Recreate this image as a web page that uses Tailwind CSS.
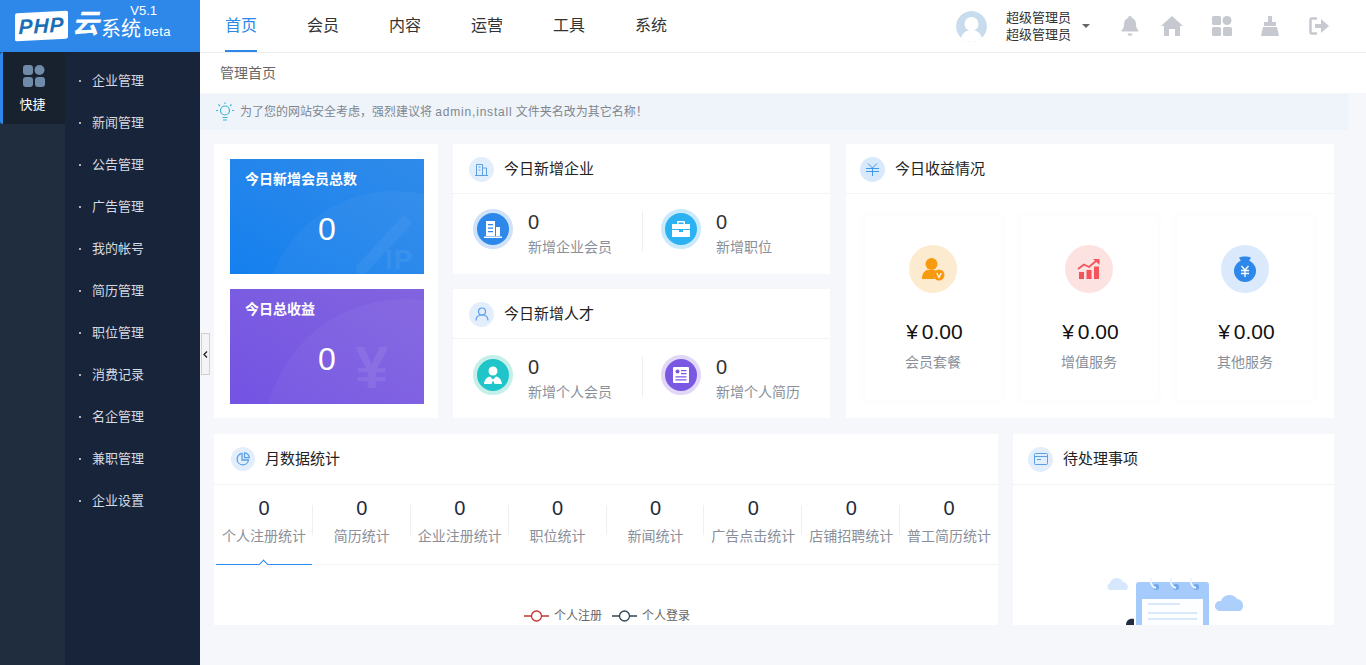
<!DOCTYPE html>
<html lang="zh-CN">
<head>
    <meta charset="UTF-8">
    <title>管理首页</title>
    <script src="https://cdn.jsdelivr.net/npm/@tailwindcss/browser@4"></script>
</head>
<body class="h-[665px] overflow-hidden bg-[#f6f7fb] text-[#333] font-['Liberation_Sans','Noto_Sans_CJK_SC',sans-serif]">
<div class="flex h-[665px]">
    <!-- 左侧 -->
    <aside class="w-[200px] shrink-0 flex flex-col">
        <div class="h-[52px] bg-[#2d88ea] flex items-center pl-[15px] text-white">
            <div class="w-[53px] h-[28px] bg-white rounded-[2px] -skew-y-3 flex items-center justify-center text-[#1a6fb5] font-bold italic text-[21px] tracking-[1px]">PHP</div>
            <span class="ml-[4px] text-[27px] font-bold italic leading-none -mt-[4px]">云</span>
            <span class="ml-[2px] text-[20px] leading-none mt-[5px]">系统</span>
            <div class="flex flex-col items-end -ml-[10px] -mt-[6px] w-[40px]">
                <span class="text-[13px] leading-none mr-[14px] -mt-[4px]">V5.1</span>
                <span class="text-[13px] leading-none mt-[8px] tracking-[.5px]">beta</span>
            </div>
        </div>
        <div class="flex-1 flex">
            <div class="w-[65px] bg-[#1f2d3e]">
                <div class="h-[72px] bg-[#18222f] border-l-[3px] border-[#2d88ea] rounded-l-[3px] flex flex-col items-center pt-[13px]">
                    <svg class="w-[22px] h-[22px]" viewBox="0 0 22 22" fill="#6f8ba8"><rect x="0" y="0" width="10" height="10" rx="3"/><circle cx="16.5" cy="5" r="5"/><rect x="0" y="12" width="10" height="10" rx="3"/><rect x="12" y="12" width="10" height="10" rx="3"/></svg>
                    <span class="text-[13px] text-white mt-[8px] -ml-[3px]">快捷</span>
                </div>
            </div>
            <ul class="w-[135px] bg-[#17243a] pt-[8px] text-[13px] text-[#d5dae0]">
                <li class="h-[42px] flex items-center pl-[14px]"><i class="w-[2px] h-[2px] bg-[#aab2bc] mr-[11px]"></i>企业管理</li>
                <li class="h-[42px] flex items-center pl-[14px]"><i class="w-[2px] h-[2px] bg-[#aab2bc] mr-[11px]"></i>新闻管理</li>
                <li class="h-[42px] flex items-center pl-[14px]"><i class="w-[2px] h-[2px] bg-[#aab2bc] mr-[11px]"></i>公告管理</li>
                <li class="h-[42px] flex items-center pl-[14px]"><i class="w-[2px] h-[2px] bg-[#aab2bc] mr-[11px]"></i>广告管理</li>
                <li class="h-[42px] flex items-center pl-[14px]"><i class="w-[2px] h-[2px] bg-[#aab2bc] mr-[11px]"></i>我的帐号</li>
                <li class="h-[42px] flex items-center pl-[14px]"><i class="w-[2px] h-[2px] bg-[#aab2bc] mr-[11px]"></i>简历管理</li>
                <li class="h-[42px] flex items-center pl-[14px]"><i class="w-[2px] h-[2px] bg-[#aab2bc] mr-[11px]"></i>职位管理</li>
                <li class="h-[42px] flex items-center pl-[14px]"><i class="w-[2px] h-[2px] bg-[#aab2bc] mr-[11px]"></i>消费记录</li>
                <li class="h-[42px] flex items-center pl-[14px]"><i class="w-[2px] h-[2px] bg-[#aab2bc] mr-[11px]"></i>名企管理</li>
                <li class="h-[42px] flex items-center pl-[14px]"><i class="w-[2px] h-[2px] bg-[#aab2bc] mr-[11px]"></i>兼职管理</li>
                <li class="h-[42px] flex items-center pl-[14px]"><i class="w-[2px] h-[2px] bg-[#aab2bc] mr-[11px]"></i>企业设置</li>
            </ul>
        </div>
    </aside>

    <!-- 右侧 -->
    <div class="flex-1 min-w-0 relative">
        <header class="h-[53px] bg-white border-b border-[#eeeff3] flex items-center">
            <nav class="flex h-full text-[16px] text-[#333] pl-[25px] gap-[50px]">
                <a class="h-full flex items-center pt-[2px] text-[#2d88ea] border-b-2 border-[#2d88ea] w-[32px]">首页</a>
                <a class="h-full flex items-center w-[32px]">会员</a>
                <a class="h-full flex items-center w-[32px]">内容</a>
                <a class="h-full flex items-center w-[32px]">运营</a>
                <a class="h-full flex items-center w-[32px]">工具</a>
                <a class="h-full flex items-center w-[32px]">系统</a>
            </nav>
            <div class="ml-auto flex items-center">
                <svg class="w-[31px] h-[31px] rounded-full" viewBox="0 0 31 31"><circle cx="15.5" cy="15.5" r="15.5" fill="#c9dcee"/><circle cx="15.5" cy="13" r="7" fill="#fff"/><path d="M5 27c2-6 6-8 10.500-8s8.500 2 10.500 8a15.500 15.500 0 0 1-21 0z" fill="#fff"/></svg>
                <div class="ml-[19px] text-[13px] leading-[17px] text-[#333]">
                    <div>超级管理员</div>
                    <div>超级管理员</div>
                </div>
                <span class="ml-[11px] w-0 h-0 border-x-[4px] border-x-transparent border-t-[4px] border-t-[#666]"></span>
                <div class="flex items-center mr-[37px] ml-[31px] text-[#c6c9d0]">
                    <svg class="w-[18px] h-[20px]" viewBox="0 0 18 20" fill="currentColor"><path d="M9 0a2 2 0 0 1 2 2c3 1 4 3.500 4 6.500 0 3 1 4.500 2.500 6v1h-17v-1C2 13 3 11.500 3 8.500 3 5.500 4 3 7 2a2 2 0 0 1 2-2z"/><path d="M6.500 17.500h5a2.500 2.500 0 0 1-5 0z"/></svg>
                    <svg class="w-[22px] h-[20px] ml-[22px]" viewBox="0 0 22 20" fill="currentColor"><path d="M11 0 22 10h-3v10h-5v-7H8v7H3V10H0z"/></svg>
                    <svg class="w-[20px] h-[20px] ml-[29px]" viewBox="0 0 20 20" fill="currentColor"><rect width="9" height="9" rx="1.500"/><circle cx="15" cy="4.500" r="4.500"/><rect y="11" width="9" height="9" rx="1.500"/><rect x="11" y="11" width="9" height="9" rx="1.500"/></svg>
                    <svg class="w-[18px] h-[20px] ml-[29px]" viewBox="0 0 18 20" fill="currentColor"><rect x="7" y="0" width="4" height="7"/><rect x="3" y="6" width="12" height="4"/><path d="M2 11h14l2 9H0z"/></svg>
                    <svg class="w-[20px] h-[18px] ml-[30px]" viewBox="0 0 20 18" fill="none"><path d="M8 1.500H2.500a1 1 0 0 0-1 1v13a1 1 0 0 0 1 1H8" stroke="currentColor" stroke-width="2.500"/><path d="M6 7h6V2l8 7-8 7v-5H6z" fill="currentColor"/></svg>
                </div>
            </div>
        </header>

        <div class="h-[40px] bg-white flex items-center pl-[20px] text-[14px] text-[#666]">管理首页</div>

        <div class="h-[36px] mr-[17px] mt-[1px] bg-[#eef4fa] flex items-center pl-[15px] text-[12px] text-[#808690]">
            <svg class="w-[20px] h-[20px] mr-[5px]" viewBox="0 0 20 20" fill="none" stroke="#3cb7d8" stroke-width="1.200"><circle cx="10" cy="8.500" r="4.500"/><path d="M7.500 15.500h5M8 18h4M10 0.500v1.500M1 8.500h2M17 8.500h2M3.500 2.500l1.500 1.500M16.500 2.500 15 4"/></svg>
            <span>为了您的网站安全考虑，强烈建议将 <span class="tracking-[.8px]">admin,install</span> 文件夹名改为其它名称！</span>
        </div>

        <main class="pl-[14px] pr-[32px] pt-[14px]">
            <div class="flex h-[274px]">
                <!-- 今日数字 -->
                <section class="w-[224px] shrink-0 bg-white pl-[16px] pt-[15px] flex flex-col gap-[15px]">
                    <div class="relative overflow-hidden w-[194px] h-[115px] bg-linear-to-tr from-[#1480ee] to-[#2f8bea] text-white">
                        <div class="absolute left-[34px] top-[32px] w-[260px] h-[260px] rounded-full bg-white/[.04]"></div>
                        <div class="absolute left-[155px] bottom-0 text-[28px] font-bold text-white/[.08] leading-none tracking-[1px]">IP</div>
                        <svg class="absolute left-[126px] top-[56px] w-[56px] h-[59px]" viewBox="0 0 56 59" fill="none"><path d="M2 58 52 4" stroke="#fff" stroke-opacity=".05" stroke-width="12"/></svg>
                        <div class="relative pl-[15px] pt-[10px] text-[14px] leading-[20px] font-bold">今日新增会员总数</div>
                        <div class="relative text-center text-[32px] leading-none mt-[24px]">0</div>
                    </div>
                    <div class="relative overflow-hidden w-[194px] h-[115px] bg-linear-to-tr from-[#7353e3] to-[#8264df] text-white">
                        <div class="absolute left-[34px] top-[10px] w-[280px] h-[280px] rounded-full bg-white/[.04]"></div>
                        <div class="absolute left-[125px] bottom-0 text-[60px] font-bold text-white/[.08] leading-[1.2]">¥</div>
                        <div class="relative pl-[15px] pt-[10px] text-[14px] leading-[20px] font-bold">今日总收益</div>
                        <div class="relative text-center text-[32px] leading-none mt-[24px]">0</div>
                    </div>
                </section>

                <!-- 企业、人才 -->
                <div class="w-[377px] ml-[15px] shrink-0 flex flex-col gap-[15px]">
                    <section class="h-[130px] bg-white">
                        <div class="h-[50px] pt-px border-b border-[#f2f3f7] flex items-center pl-[16px] text-[15px] text-[#222]">
                            <span class="w-[25px] h-[25px] rounded-full bg-[#e3eefc] flex items-center justify-center mr-[10px]">
                                <svg class="w-[13px] h-[13px]" viewBox="0 0 13 13" fill="none" stroke="#5a9fe8"><path d="M1.500 12V1.500h6V12M7.500 5h4v7M0 12.500h13M3.500 4h2M3.500 7h2"/></svg>
                            </span>今日新增企业
                        </div>
                        <div class="flex pt-[15px] pl-[20px]">
                            <div class="w-[169px] flex">
                                <span class="w-[40px] h-[40px] rounded-full bg-[#2d88ea] border-[4px] border-[#cfe2f9] flex items-center justify-center">
                                    <svg class="w-[20px] h-[20px]" viewBox="0 0 20 20" fill="#fff"><path d="M3 2h9v15H3z"/><path d="M13 8h4v9h-4zM1 17.500h18V19H1z"/><path d="M5 5h5v1.300H5zM5 8.500h5v1.300H5zM5 12h5v1.300H5z" fill="#2d88ea"/></svg>
                                </span>
                                <div class="ml-[15px]">
                                    <div class="text-[20px] leading-[26px] text-[#333]">0</div>
                                    <div class="text-[14px] leading-[24px] text-[#8a8f99]">新增企业会员</div>
                                </div>
                            </div>
                            <div class="w-px h-[40px] mt-[2px] bg-[#eeeff3]"></div>
                            <div class="flex ml-[18px]">
                                <span class="w-[40px] h-[40px] rounded-full bg-[#2cb1f2] border-[4px] border-[#c9eafb] flex items-center justify-center">
                                    <svg class="w-[20px] h-[20px]" viewBox="0 0 20 20" fill="#fff"><path d="M7 2h6a1 1 0 0 1 1 1v2h-1.500V3.500h-5V5H6V3a1 1 0 0 1 1-1z"/><path d="M1 5h18v5H1zM1 11h7v2h4v-2h7v7H1z"/></svg>
                                </span>
                                <div class="ml-[15px]">
                                    <div class="text-[20px] leading-[26px] text-[#333]">0</div>
                                    <div class="text-[14px] leading-[24px] text-[#8a8f99]">新增职位</div>
                                </div>
                            </div>
                        </div>
                    </section>
                    <section class="h-[129px] bg-white">
                        <div class="h-[50px] pt-px border-b border-[#f2f3f7] flex items-center pl-[16px] text-[15px] text-[#222]">
                            <span class="w-[25px] h-[25px] rounded-full bg-[#e3eefc] flex items-center justify-center mr-[10px]">
                                <svg class="w-[14px] h-[14px]" viewBox="0 0 14 14" fill="none" stroke="#5a9fe8" stroke-width="1.200"><circle cx="7" cy="4.500" r="3.500"/><path d="M1 13.500c0-3.500 2.500-5.500 6-5.500s6 2 6 5.500"/></svg>
                            </span>今日新增人才
                        </div>
                        <div class="flex pt-[16px] pl-[20px]">
                            <div class="w-[169px] flex">
                                <span class="w-[40px] h-[40px] rounded-full bg-[#1fc5c9] border-[4px] border-[#c5efe9] flex items-center justify-center">
                                    <svg class="w-[20px] h-[20px]" viewBox="0 0 20 20" fill="#fff"><circle cx="10" cy="6" r="4.500"/><path d="M1 19c.5-4.500 3-7 6-7.500l3 3 3-3c3 .5 5.500 3 6 7.500H11.500L10 15.500 8.500 19z"/></svg>
                                </span>
                                <div class="ml-[15px] -mt-px">
                                    <div class="text-[20px] leading-[26px] text-[#333]">0</div>
                                    <div class="text-[14px] leading-[24px] text-[#8a8f99]">新增个人会员</div>
                                </div>
                            </div>
                            <div class="w-px h-[40px] mt-[2px] bg-[#eeeff3]"></div>
                            <div class="flex ml-[18px]">
                                <span class="w-[40px] h-[40px] rounded-full bg-[#7a58e2] border-[4px] border-[#e0d8f6] flex items-center justify-center">
                                    <svg class="w-[18px] h-[18px]" viewBox="0 0 18 18" fill="#fff"><path d="M2 1h14a1 1 0 0 1 1 1v14a1 1 0 0 1-1 1H2a1 1 0 0 1-1-1V2a1 1 0 0 1 1-1z"/><circle cx="5.500" cy="5.500" r="2" fill="#7a58e2"/><path d="M9 4h5.500v1.200H9zM9 7h5.500v1.200H9zM3.500 10.300h11v1.200h-11zM3.500 13.300h11v1.200h-11z" fill="#7a58e2"/></svg>
                                </span>
                                <div class="ml-[15px] -mt-px">
                                    <div class="text-[20px] leading-[26px] text-[#333]">0</div>
                                    <div class="text-[14px] leading-[24px] text-[#8a8f99]">新增个人简历</div>
                                </div>
                            </div>
                        </div>
                    </section>
                </div>

                <!-- 收益 -->
                <section class="flex-1 ml-[16px] min-w-0 bg-white">
                    <div class="h-[50px] pt-px border-b border-[#f2f3f7] flex items-center pl-[14px] text-[15px] text-[#222]">
                        <span class="w-[25px] h-[25px] rounded-full bg-[#d8e9fc] flex items-center justify-center mr-[10px]">
                            <svg class="w-[13px] h-[13px]" viewBox="0 0 13 13" fill="none" stroke="#3f97ee"><path d="M2 .5 6.500 5 11 .5M6.500 5v8M0 5.500h13M0 8.500h13"/></svg>
                        </span>今日收益情况
                    </div>
                    <div class="flex pl-[19px] pt-[22px] gap-[20px]">
                        <div class="w-[136px] h-[184px] bg-white shadow-[0_0_8px_rgba(120,130,160,0.05)] flex flex-col items-center pt-[29px]">
                            <span class="w-[48px] h-[48px] rounded-full bg-[#fdebd0] flex items-center justify-center">
                                <svg class="w-[24px] h-[24px]" viewBox="0 0 24 24" fill="#f79a0f"><circle cx="10.500" cy="7" r="6"/><path d="M1 22c0-5 2-8 5-9h9c-2 2-3 6-1 9z"/><circle cx="18" cy="18" r="5.500"/><path d="m15.800 16 2.200 4.500 2.200-4.500" stroke="#fff" stroke-width="1.200" fill="none"/></svg>
                            </span>
                            <div class="text-[21px] leading-[26px] mt-[26px] pl-[3px] text-[#111] [word-spacing:-2px]">¥ 0.00</div>
                            <div class="text-[14px] leading-[20px] mt-[7px] text-[#8a8f99]">会员套餐</div>
                        </div>
                        <div class="w-[136px] h-[184px] bg-white shadow-[0_0_8px_rgba(120,130,160,0.05)] flex flex-col items-center pt-[29px]">
                            <span class="w-[48px] h-[48px] rounded-full bg-[#fde2e2] flex items-center justify-center">
                                <svg class="w-[24px] h-[24px]" viewBox="0 0 24 24" fill="#f4545a"><path d="M2 15h5v7H2zM9.500 13h5v9h-5zM17 9.500h5V22h-5z"/><path d="m1 12 6-4.500 5 2.500 7-6" fill="none" stroke="#f4545a" stroke-width="1.800"/><path d="M16 2h6.500v6z"/></svg>
                            </span>
                            <div class="text-[21px] leading-[26px] mt-[26px] pl-[3px] text-[#111] [word-spacing:-2px]">¥ 0.00</div>
                            <div class="text-[14px] leading-[20px] mt-[7px] text-[#8a8f99]">增值服务</div>
                        </div>
                        <div class="w-[136px] h-[184px] bg-white shadow-[0_0_8px_rgba(120,130,160,0.05)] flex flex-col items-center pt-[29px]">
                            <span class="w-[48px] h-[48px] rounded-full bg-[#dbe9fd] flex items-center justify-center">
                                <svg class="w-[24px] h-[26px]" viewBox="0 0 24 26" fill="#2d88ea"><path d="M6 1.500C9 0 15 0 18 1.500L15.500 6h-7z"/><circle cx="12" cy="15" r="11"/><path d="m8.500 10 3.500 4 3.500-4M8 14.500h8M8 17.500h8M12 14v7" fill="none" stroke="#fff" stroke-width="1.300"/></svg>
                            </span>
                            <div class="text-[21px] leading-[26px] mt-[26px] pl-[3px] text-[#111] [word-spacing:-2px]">¥ 0.00</div>
                            <div class="text-[14px] leading-[20px] mt-[7px] text-[#8a8f99]">其他服务</div>
                        </div>
                    </div>
                </section>
            </div>

            <div class="flex gap-[15px] h-[191px] mt-[16px]">
                <!-- 月数据 -->
                <section class="w-[784px] shrink-0 bg-white overflow-hidden">
                    <div class="h-[51px] border-b border-[#f2f3f7] flex items-center pl-[17px] text-[15px] text-[#222]">
                        <span class="w-[24px] h-[24px] rounded-full bg-[#e3eefc] flex items-center justify-center mr-[10px]">
                            <svg class="w-[14px] h-[14px]" viewBox="0 0 14 14" fill="none" stroke="#5a9fe8" stroke-width="1.300"><path d="M6 1.500a5.700 5.700 0 1 0 6.500 6.500H6z"/><path d="M8.500.8a5.500 5.500 0 0 1 4.800 4.800H8.500z"/></svg>
                        </span>月数据统计
                    </div>
                    <div class="relative h-[80px] border-b border-[#f2f3f7] flex pl-px">
                        <div class="relative w-[98px] text-center h-[80px]">
                            <div class="text-[20px] leading-[26px] mt-[10px] text-[#1f2d3e]">0</div>
                            <div class="text-[14px] leading-[20px] mt-[5px] text-[#8a8f99]">个人注册统计</div>
                            <span class="absolute left-px right-px bottom-0 h-px bg-[#2d88ea]"></span>
                            <span class="absolute left-[45px] bottom-[-3px] w-[7px] h-[7px] rotate-45 bg-white border-l border-t border-[#2d88ea]"></span>
                            <i class="absolute right-0 top-[20px] w-px h-[30px] bg-[#eeeff3]"></i>
                        </div>
                        <div class="relative w-[98px] text-center">
                            <div class="text-[20px] leading-[26px] mt-[10px] text-[#1f2d3e]">0</div>
                            <div class="text-[14px] leading-[20px] mt-[5px] text-[#8a8f99]">简历统计</div>
                            <i class="absolute right-0 top-[20px] w-px h-[30px] bg-[#eeeff3]"></i>
                        </div>
                        <div class="relative w-[98px] text-center">
                            <div class="text-[20px] leading-[26px] mt-[10px] text-[#1f2d3e]">0</div>
                            <div class="text-[14px] leading-[20px] mt-[5px] text-[#8a8f99]">企业注册统计</div>
                            <i class="absolute right-0 top-[20px] w-px h-[30px] bg-[#eeeff3]"></i>
                        </div>
                        <div class="relative w-[98px] text-center">
                            <div class="text-[20px] leading-[26px] mt-[10px] text-[#1f2d3e]">0</div>
                            <div class="text-[14px] leading-[20px] mt-[5px] text-[#8a8f99]">职位统计</div>
                            <i class="absolute right-0 top-[20px] w-px h-[30px] bg-[#eeeff3]"></i>
                        </div>
                        <div class="relative w-[98px] text-center">
                            <div class="text-[20px] leading-[26px] mt-[10px] text-[#1f2d3e]">0</div>
                            <div class="text-[14px] leading-[20px] mt-[5px] text-[#8a8f99]">新闻统计</div>
                            <i class="absolute right-0 top-[20px] w-px h-[30px] bg-[#eeeff3]"></i>
                        </div>
                        <div class="relative w-[98px] text-center">
                            <div class="text-[20px] leading-[26px] mt-[10px] text-[#1f2d3e]">0</div>
                            <div class="text-[14px] leading-[20px] mt-[5px] text-[#8a8f99]">广告点击统计</div>
                            <i class="absolute right-0 top-[20px] w-px h-[30px] bg-[#eeeff3]"></i>
                        </div>
                        <div class="relative w-[98px] text-center">
                            <div class="text-[20px] leading-[26px] mt-[10px] text-[#1f2d3e]">0</div>
                            <div class="text-[14px] leading-[20px] mt-[5px] text-[#8a8f99]">店铺招聘统计</div>
                            <i class="absolute right-0 top-[20px] w-px h-[30px] bg-[#eeeff3]"></i>
                        </div>
                        <div class="relative w-[98px] text-center">
                            <div class="text-[20px] leading-[26px] mt-[10px] text-[#1f2d3e]">0</div>
                            <div class="text-[14px] leading-[20px] mt-[5px] text-[#8a8f99]">普工简历统计</div>
                        </div>
                    </div>
                    <div class="flex items-center pl-[310px] pt-[43px] text-[12px] leading-[16px] text-[#666]">
                        <svg class="w-[25px] h-[12px]" viewBox="0 0 25 12" fill="none" stroke="#c23531" stroke-width="1.300"><path d="M0 6h7M18 6h7"/><circle cx="12.500" cy="6" r="5"/></svg>
                        <span class="ml-[5px]">个人注册</span>
                        <svg class="w-[25px] h-[12px] ml-[10px]" viewBox="0 0 25 12" fill="none" stroke="#2f4554" stroke-width="1.300"><path d="M0 6h7M18 6h7"/><circle cx="12.500" cy="6" r="5"/></svg>
                        <span class="ml-[5px]">个人登录</span>
                    </div>
                </section>

                <!-- 待处理 -->
                <section class="flex-1 min-w-0 bg-white overflow-hidden">
                    <div class="h-[51px] border-b border-[#f2f3f7] flex items-center pl-[15px] text-[15px] text-[#222]">
                        <span class="w-[25px] h-[25px] rounded-full bg-[#e3eefc] flex items-center justify-center mr-[10px]">
                            <svg class="w-[14px] h-[12px]" viewBox="0 0 14 12" fill="none" stroke="#5a9fe8"><rect x=".5" y=".5" width="13" height="11" rx="1"/><path d="M.5 3.500h13M3 6.500h4"/></svg>
                        </span>待处理事项
                    </div>
                    <svg class="block ml-[90px] mt-[88px] w-[160px] h-[60px]" viewBox="0 0 160 60">
                        <path d="M6 17a4 4 0 0 1 1-7 7 7 0 0 1 13-1 5 5 0 0 1 4 8z" fill="#d8e8fc"/>
                        <path d="M116 38a5 5 0 0 1 2-10 9 9 0 0 1 16-2 6.500 6.500 0 0 1 3 12z" fill="#adcffb"/>
                        <path d="M33 12a3 3 0 0 1 3-3h67a3 3 0 0 1 3 3v50H33z" fill="#a4cbfb"/>
                        <path d="M39 26h61v36H39z" fill="#fdfeff"/>
                        <path d="M45 31h32M45 40h49M45 46h49" stroke="#cfe0fa" stroke-width="1.500"/>
                        <circle cx="53" cy="14" r="3" fill="#6fa6ec"/><circle cx="73" cy="14" r="3" fill="#6fa6ec"/><circle cx="93" cy="14" r="3" fill="#6fa6ec"/>
                        <path d="M48 5c-1 5 1 9 5 10M68 5c-1 5 1 9 5 10M88 5c-1 5 1 9 5 10" fill="none" stroke="#eef5fe" stroke-width="2"/>
                        <path d="M23 52c0-4 3-7 8-6v6z" fill="#1f2d3e"/>
                    </svg>
                </section>
            </div>
        </main>

        <!-- 折叠按钮 -->
        <button class="absolute left-[1px] top-[333px] w-[9px] h-[42px] bg-[#f4f4f4] border border-[#d0d0d0] flex items-center justify-center">
            <svg class="w-[5px] h-[7px] shrink-0" viewBox="0 0 5 7" fill="none" stroke="#222" stroke-width="1.300"><path d="M4 .5 1 3.500l3 3"/></svg>
        </button>
    </div>
</div>
</body>
</html>
